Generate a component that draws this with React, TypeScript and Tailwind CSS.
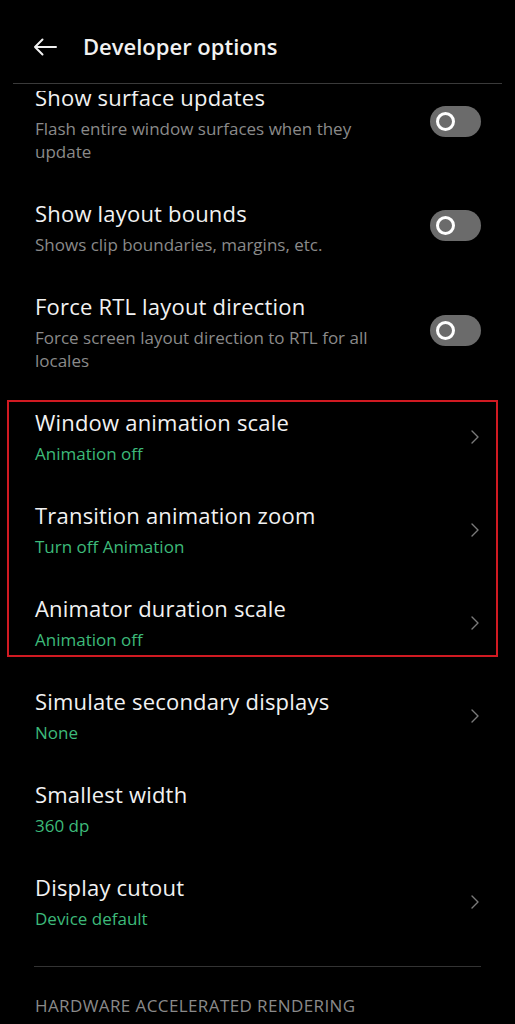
import { ChevronRight } from 'lucide-react';

type Row = {
  title: string;
  subtitle?: string;
  accent?: boolean;
  control: 'toggle' | 'chevron' | 'none';
};

const TOP_ROWS: Row[] = [
  { title: 'Show surface updates', subtitle: 'Flash entire window surfaces when they update', control: 'toggle' },
  { title: 'Show layout bounds', subtitle: 'Shows clip boundaries, margins, etc.', control: 'toggle' },
  { title: 'Force RTL layout direction', subtitle: 'Force screen layout direction to RTL for all locales', control: 'toggle' },
];

const ANIM_ROWS: Row[] = [
  { title: 'Window animation scale', subtitle: 'Animation off', accent: true, control: 'chevron' },
  { title: 'Transition animation zoom', subtitle: 'Turn off Animation', accent: true, control: 'chevron' },
  { title: 'Animator duration scale', subtitle: 'Animation off', accent: true, control: 'chevron' },
];

const BOTTOM_ROWS: Row[] = [
  { title: 'Simulate secondary displays', subtitle: 'None', accent: true, control: 'chevron' },
  { title: 'Smallest width', subtitle: '360 dp', accent: true, control: 'none' },
  { title: 'Display cutout', subtitle: 'Device default', accent: true, control: 'chevron' },
];

const Toggle = () => (
  <div className="w-[51px] h-[31px] shrink-0 rounded-full bg-[#6b6b6b] flex items-center pl-[6px] -mt-[4px]">
    <div className="w-[19px] h-[19px] rounded-full border-[3px] border-white bg-[#6b6b6b]" />
  </div>
);

const SettingRow = ({ row, first }: { row: Row; first?: boolean }) => (
  <div className={`flex items-center pl-[35px] pr-[34px] py-[18px] ${first ? '-mt-[26px]' : ''}`}>
    <div className="flex-1 min-w-0">
      <div className="text-[22px] leading-[28px] tracking-[0.2px] text-[#f2f2f2] whitespace-nowrap">{row.title}</div>
      {row.subtitle && (
        <div
          className={`mt-[6px] max-w-[345px] text-[17px] leading-[23px] ${
            row.accent ? 'text-[#3dba7a]' : 'text-[#8a8a8a]'
          }`}
        >
          {row.subtitle}
        </div>
      )}
    </div>
    {row.control === 'toggle' && <Toggle />}
    {row.control === 'chevron' && (
      <ChevronRight className="w-[24px] h-[24px] shrink-0 text-[#7a7a7a] -mr-[6px]" strokeWidth={1.4} />
    )}
  </div>
);

export default function App() {
  return (
    <div
      className="w-[515px] h-[1024px] bg-black overflow-hidden flex flex-col"
      style={{ fontFamily: '"Open Sans", Roboto, sans-serif' }}
    >
      {/* Header */}
      <div className="h-[91px] shrink-0 px-[13px]">
        <div className="h-[84px] flex items-center pl-[20px] pt-[10px] border-b border-[#3a3a3a]">
          <svg width="24" height="18" viewBox="0 0 24 18" fill="none" className="shrink-0">
            <path d="M23 9H2M9.5 1.5L2 9l7.5 7.5" stroke="#f0f0f0" strokeWidth="2" strokeLinecap="round" strokeLinejoin="round" />
          </svg>
          <span className="ml-[26px] text-[22px] font-semibold text-[#f2f2f2]">Developer options</span>
        </div>
      </div>

      {/* List */}
      <div className="flex-1 overflow-hidden">
        {TOP_ROWS.map((row, i) => (
          <SettingRow key={row.title} row={row} first={i === 0} />
        ))}

        <div className="relative">
          {ANIM_ROWS.map((row) => (
            <SettingRow key={row.title} row={row} />
          ))}
          {/* highlight box */}
          <div className="absolute left-[7px] right-[17px] top-[10px] bottom-[12px] border-2 border-[#d11a22] pointer-events-none" />
        </div>

        {BOTTOM_ROWS.map((row) => (
          <SettingRow key={row.title} row={row} />
        ))}

        <div className="mx-[34px] mt-[18px] border-t border-[#333333]" />
        <div className="px-[35px] pt-[27px] text-[17px] leading-[23px] tracking-[0.4px] text-[#8a8a8a]">
          HARDWARE ACCELERATED RENDERING
        </div>
      </div>
    </div>
  );
}
